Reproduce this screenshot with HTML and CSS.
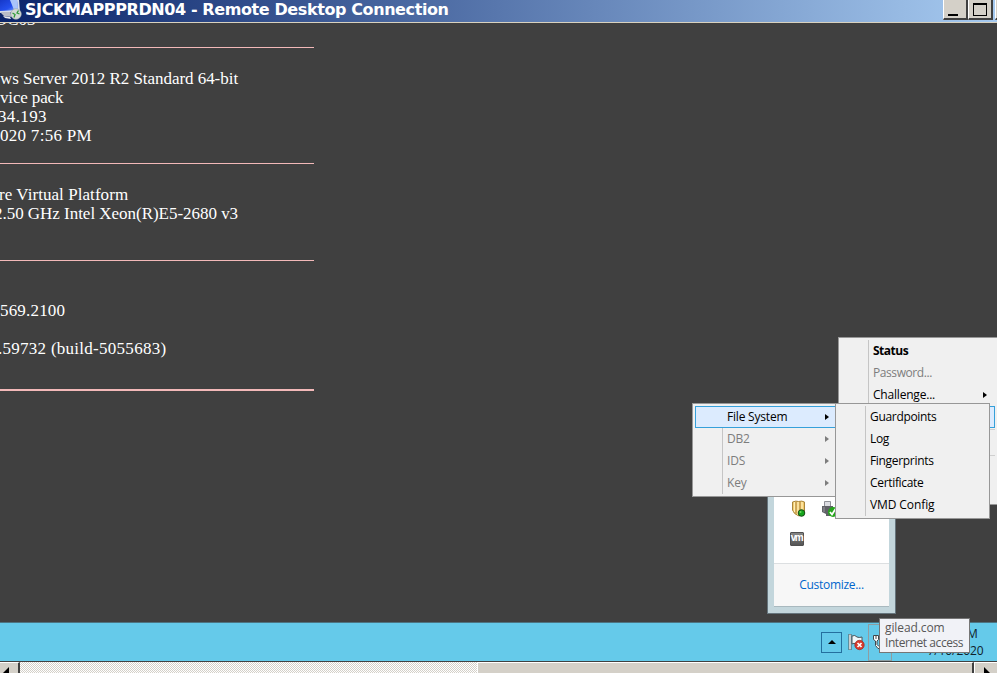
FILE: index.html
```html
<!DOCTYPE html>
<html lang="en">
<head>
<meta charset="utf-8">
<title>SJCKMAPPPRDN04 - Remote Desktop Connection</title>
<link rel="stylesheet" href="styles.css">
</head>
<body>
<div class="window">
  <header class="titlebar">
    <svg class="rdp-icon" width="23" height="22" viewBox="0 0 23 22">
      <defs>
        <linearGradient id="screen" x1="0" y1="0" x2="1" y2="1"><stop offset="0" stop-color="#1638c8"/><stop offset=".6" stop-color="#2450ee"/><stop offset="1" stop-color="#8fb4fa"/></linearGradient>
      </defs>
      <path d="M0 0H19L20 12L0 13Z" fill="#d5dce8"/>
      <path d="M0 0H17L18 10L0 11Z" fill="url(#screen)"/>
      <path d="M10 0H17L18 10L14 10Z" fill="#a9c4fa"/>
      <path d="M0 12L10 12L12 17L4 16Z" fill="#b9bdc6"/>
      <path d="M3 16L10 17L11 19L5 18Z" fill="#e7e9ec"/>
      <circle cx="16" cy="14" r="5.300" fill="#d2d8d4" stroke="#9aa3a5" stroke-width=".6"/>
      <path d="M12.500 13L15 14.500L14 17.500M18.500 10.500L17 13L19.500 14" fill="none" stroke="#2f9b37" stroke-width="1.300"/>
    </svg>
    <h1 class="title">SJCKMAPPPRDN04 - Remote Desktop Connection</h1>
    <div class="caption-buttons">
      <span class="caption"><i class="minimize"></i></span>
      <span class="caption"><i class="maximize"></i></span>
      <span class="caption close"></span>
    </div>
  </header>

  <main class="desktop">
    <section class="info">
      <p class="host">DC03</p>
      <hr class="rule-1">
      <p class="os">ws Server 2012 R2 Standard 64-bit</p>
      <p class="pack">vice pack</p>
      <p class="ip">34.193</p>
      <p class="time">020 7:56 PM</p>
      <hr class="rule-2">
      <p class="platform">re Virtual Platform</p>
      <p class="cpu">2.50 GHz Intel Xeon(R)E5-2680 v3</p>
      <hr class="rule-3">
      <p class="version">569.2100</p>
      <p class="build">.59732 (build-5055683)</p>
      <hr class="rule-4">
    </section>

    <section class="tray-popup">
      <div class="tray-icons">
        <svg class="tray-shield" width="16" height="18" viewBox="0 0 16 18">
          <path d="M1.500 2Q5 .5 7.500 1.500Q11 .5 13.500 2V11Q12 14 8 16Q2.500 14 1.500 10Z" fill="#f3c96a" stroke="#a8863d"/>
          <path d="M3.500 2V12M7 2V15M11 2V13" stroke="#fff0b8" stroke-width="1.300"/><path d="M5 2V13.500M9 2V13" stroke="#ad8440" stroke-width="1"/>
          <circle cx="10.500" cy="13" r="3.300" fill="#15a51c" stroke="#164b14"/><circle cx="9.500" cy="12" r="1" fill="#6ddc60"/>
        </svg>
        <svg class="tray-usb" width="18" height="18" viewBox="0 0 18 18">
          <path d="M3.500 1.500H9.500V7H3.500Z" fill="#dcdde2" stroke="#8f9197"/>
          <path d="M1 6H12V11L9 14V16H5V14L1 12Z" fill="#606167"/><path d="M3 7V12" stroke="#999ba0"/>
          <circle cx="12" cy="12" r="5" fill="#25a51b"/><path d="M9 12L11 14.500L14.500 9" fill="none" stroke="#fff" stroke-width="1.800"/>
        </svg>
        <span class="tray-vm">vm</span>
      </div>
      <footer class="tray-footer"><a class="customize">Customize...</a></footer>
    </section>

    <ul class="menu menu-main">
      <li class="bold">Status</li>
      <li class="disabled">Password...</li>
      <li class="parent">Challenge...</li>
      <li class="selected"></li>
      <li class="separator"></li>
      <li></li>
      <li class="separator"></li>
    </ul>
    <ul class="menu menu-agent">
      <li class="selected parent">File System</li>
      <li class="disabled parent">DB2</li>
      <li class="disabled parent">IDS</li>
      <li class="disabled parent">Key</li>
    </ul>
    <ul class="menu menu-files">
      <li>Guardpoints</li>
      <li>Log</li>
      <li>Fingerprints</li>
      <li>Certificate</li>
      <li class="config">VMD Config</li>
    </ul>
  </main>

  <footer class="taskbar">
    <span class="show-hidden"></span>
    <svg class="flag" width="18" height="18" viewBox="0 0 18 18">
      <path d="M2 1V17" stroke="#4d5559" stroke-width="3"/><path d="M2 1.500V16.500" stroke="#fff" stroke-width="1.400"/>
      <path d="M4 3Q7 1.500 9 4Q11 5 14 4V11Q10 13 8 11Q6 9.500 4 11Z" fill="#eef7fa" stroke="#4d5559"/>
      <circle cx="11.500" cy="12" r="4.700" fill="#d83a2d" stroke="#9c2820" stroke-width=".7"/><path d="M9.500 10L13.500 14M13.500 10L9.500 14" stroke="#fff" stroke-width="1.700"/>
    </svg>
    <span class="network">
      <svg width="18" height="18" viewBox="0 0 18 18">
        <path d="M1.500 1.500H6.500V5.500L5 7V10.500L7 12.500H9V14.500H6L3.500 11.500V7L1.500 5.500Z" fill="#fff" stroke="#40484c"/>
        <path d="M4 2V5" stroke="#40484c"/>
        <path d="M7.500 4.500H16V11H7.500ZM8 15.500H15" fill="#fff" stroke="#40484c"/>
      </svg>
    </span>
    <time class="clock"><span>7:56 PM</span><span>7/10/2020</span></time>
    <aside class="tooltip"><span>gilead.com</span><span class="access">Internet access</span></aside>
  </footer>

  <div class="scrollbar">
    <span class="scroll-button left"></span>
    <span class="track"></span>
    <span class="thumb"></span>
    <span class="scroll-button right"></span>
  </div>
</div>
</body>
</html>
```
FILE: styles.css
```css
* { box-sizing: border-box; }
body { margin: 0; overflow: hidden; }
.window {
  width: 997px; height: 673px; overflow: hidden;
  display: flex; flex-direction: column;
  background: #404040;
  font: 12px/22px "Open Sans", "Noto Sans", sans-serif;
}

/* Title bar */
.titlebar {
  flex: 0 0 23px; display: flex; align-items: flex-start;
  background: linear-gradient(90deg, #0a246a, #a6caf0);
  border-bottom: 1px solid #d9d2bf;
}
.rdp-icon { flex: none; margin-right: 2px; }
.title {
  margin: 0; flex: 1; white-space: nowrap; color: #fff;
  font: bold 16px/19px "DejaVu Sans", sans-serif; letter-spacing: -0.4px;
}
.caption-buttons { display: flex; }
.caption {
  display: flex; width: 25px; height: 20px; background: #d4d0c8;
  border-left: 1px solid #fff; border-right: 2px solid #404040; border-bottom: 2px solid #404040;
}
.minimize { width: 10px; height: 2px; margin: 14px 0 0 4px; background: #000; }
.maximize { width: 14px; height: 13px; margin: 3px 0 0 4px; border: 1px solid #000; border-top-width: 2px; }
.close { width: 2px; margin-left: 2px; border-right: 0; }

/* Desktop */
.desktop { flex: 0 0 599px; position: relative; overflow: hidden; }
.info {
  width: 314px; margin-top: -13px; color: #fff;
  font: 17px/19px "Liberation Serif", serif;
}
.info p { margin: 0; white-space: nowrap; height: 19px; }
.info hr { height: 1px; border: 0; background: #f3b9b9; }
.info .host { text-indent: -5px; }
.info .os { letter-spacing: -0.04px; }
.info .pack { letter-spacing: -0.15px; }
.info .ip { text-indent: -2px; letter-spacing: 0.35px; }
.info .time { letter-spacing: 0.28px; }
.info .platform { text-indent: -1px; letter-spacing: 0.06px; }
.info .cpu { text-indent: -6px; letter-spacing: -0.03px; }
.info .version { letter-spacing: 0.18px; }
.info .build { margin-top: 19px; text-indent: -2px; letter-spacing: 0.27px; }
.info .rule-1 { margin: 18px 0 21px; }
.info .rule-2 { margin: 18px 0 21px; }
.info .rule-3 { margin: 37px 0 40px; }
.info .rule-4 { margin: 31px 0 0; height: 2px; }

/* Menus */
.menu {
  position: absolute; margin: 0; padding: 2px; list-style: none;
  background: #f0f0f0; border: 1px solid #979797; color: #000;
}
.menu::before {
  content: ""; position: absolute; top: 2px; bottom: 2px; left: 29px;
  width: 1px; background: #c5c5c5;
}
.menu li {
  position: relative; height: 22px; padding-left: 32px;
  line-height: 22px; white-space: nowrap; letter-spacing: -0.32px;
}
.menu .bold { font-weight: 700; letter-spacing: -0.5px; }
.menu .disabled { color: #7d7d7d; letter-spacing: -0.42px; }
.menu .config { letter-spacing: -0.1px; }
.menu .parent { letter-spacing: -0.2px; }
.menu .selected { background: #dcebfe; box-shadow: inset 0 0 0 1px #35a0da; }
.menu .separator { height: 1px; margin: 1px 0 2px 31px; background: #cfcfcf; }
.menu .parent::after {
  content: ""; position: absolute; right: 8px; top: 8px;
  border: 3px solid transparent; border-left: 4px solid currentColor; border-right: 0;
}
.menu-main { left: 838px; top: 314px; width: 159px; height: 168px; border-right: 0; }
.menu-agent { left: 692px; top: 380px; width: 148px; height: 94px; }
.menu-files { left: 835px; top: 380px; width: 155px; height: 116px; }

/* Notification overflow */
.tray-popup {
  position: absolute; left: 767px; top: 441px; width: 129px; height: 150px;
  display: flex; flex-direction: column; padding: 6px;
  background: #c3d6dc; border: 1px solid #66757d;
}
.tray-icons {
  flex: 1; display: grid; grid-template-columns: 30px 1fr; align-content: end;
  row-gap: 14px; padding: 0 16px 17px; background: #fff;
}
.tray-shield, .tray-usb { margin: -1px 0 0 1px; }
.tray-vm {
  width: 14px; height: 14px; background: linear-gradient(#858585, #555);
  border: 1px solid #505050; border-radius: 1px; color: #fff; text-align: center;
  font: bold 10px/10px "Liberation Sans", sans-serif; letter-spacing: -1.5px; text-indent: -1px;
}
.tray-footer {
  flex: 0 0 44px; background: #f7f7f7; border-top: 1px solid #dcdfe1; border-bottom: 1px solid #a9b9bf;
  text-align: center; line-height: 42px;
}
.customize { color: #0066cc; letter-spacing: -0.3px; }

/* Taskbar */
.taskbar {
  position: relative; flex: 0 0 39px; display: flex; align-items: center;
  padding-left: 821px; background: #65caea; border-top: 1px solid #4d7482;
}
.show-hidden {
  flex: none; width: 21px; height: 21px; display: grid; place-items: center;
  border: 1px solid #246f9e;
}
.show-hidden::before { content: ""; border: 4px solid transparent; border-bottom-color: #000; border-top: 0; }
.flag { flex: none; margin-left: 6px; }
.network {
  flex: none; width: 24px; height: 37px; margin-left: 2px; padding: 9px 0 0 3px;
  border: 1px solid #8f9da1;
}
.clock {
  flex: none; width: 91px; margin-left: 18px; display: flex; flex-direction: column;
  text-align: center; line-height: 17px; letter-spacing: -0.1px; color: #10222a;
}
.tooltip {
  position: absolute; left: 879px; top: -5px; width: 91px; height: 35px;
  display: flex; flex-direction: column; padding: 1px 5px;
  background: #f1f2f7; border: 1px solid #767676; color: #575757;
  line-height: 15px; letter-spacing: -0.1px; white-space: nowrap;
}
.tooltip .access { letter-spacing: -0.42px; }

/* Scroll bar */
.scrollbar {
  flex: 0 0 12px; display: flex; background: #d4d0c8; border-top: 1px solid #404040;
}
.scroll-button { flex: 0 0 20px; border-top: 1px solid #fff; border-right: 2px solid #404040; overflow: hidden; }
.scroll-button::before {
  content: ""; display: block; width: 0; margin: 4px 0 0 3px;
  border: 6px solid transparent; border-right-color: #000; border-left: 0;
}
.track { flex: 0 0 457px; background: repeating-conic-gradient(#fff 0 25%, #d4d0c8 0 50%) 0 0 / 2px 2px; }
.thumb { flex: 0 0 497px; border-left: 1px solid #fff; border-top: 1px solid #fff; border-right: 2px solid #404040; }
.scroll-button.right { flex: 1; border-left: 1px solid #fff; border-right: 0; }
.scroll-button.right::before { margin-left: 9px; border-left: 6px solid #000; border-right: 0; }
```
